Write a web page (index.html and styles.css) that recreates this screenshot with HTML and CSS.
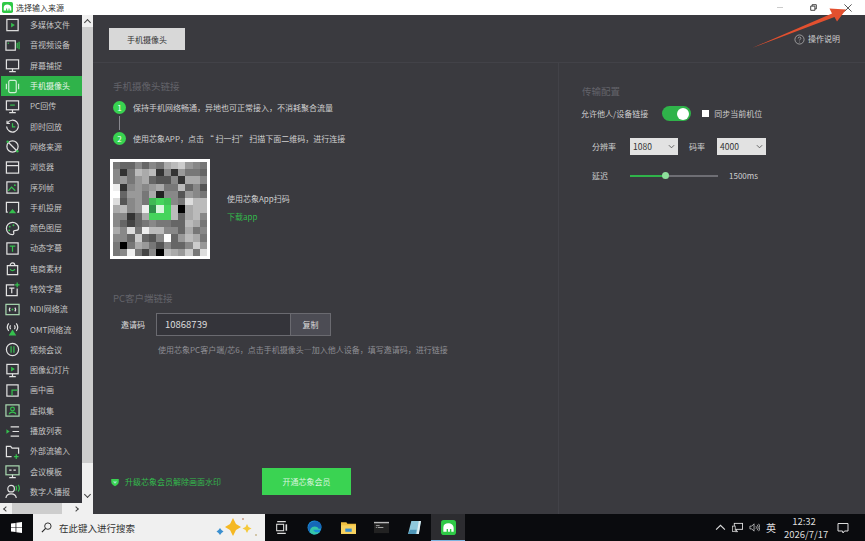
FILE: index.html
```html
<!DOCTYPE html>
<html lang="zh-CN">
<head>
  <meta charset="UTF-8" />
  <title>选择输入来源</title>
  <link rel="stylesheet" href="styles.css">
</head>
<body>

  <div class="titlebar">
    <svg class="app-logo" viewBox="0 0 16 16"><rect width="16" height="16" rx="2.5" fill="#2fc946"/><path d="M2.5 12.5V8C2.5 5 5 3.5 7.5 3.5c3.5 0 6 2 6 5v4H11V9.5H9.500v3h-2v-3H6v3z" fill="#fff"/></svg>
    <span class="title-text">选择输入来源</span>
    <div class="win-btns">
      <span class="win-min"></span>
      <svg class="win-restore" viewBox="0 0 10 10"><path d="M1 3h6v6H1zM3 3V1h6v6H7" fill="none" stroke="#333" stroke-width="1.3"/></svg>
      <svg class="win-close" viewBox="0 0 10 10"><path d="M.5.5l9 9M9.5.5l-9 9" stroke="#333" stroke-width="1"/></svg>
    </div>
  </div>

  <div class="app">
    <div class="side">
      <div class="side-top">
        <div class="source-list">
          <div class="source"><svg viewBox="0 0 16 16"><rect x="2" y="1.5" width="12" height="12"/><path class="g" d="M6.5 5v5l4-2.5z"/></svg>多媒体文件</div>
          <div class="source"><svg viewBox="0 0 16 16"><rect x="1" y="3" width="10" height="10"/><circle class="g" cx="3.5" cy="5.5" r=".8"/><path class="gs" d="M13 5v6M15 4v8"/></svg>音视频设备</div>
          <div class="source"><svg viewBox="0 0 16 16"><rect x="1.5" y="2" width="13" height="9.5"/><path d="M8 11.5v2.5M4.5 14.500h7"/></svg>屏幕捕捉</div>
          <div class="source active"><svg viewBox="0 0 16 16"><rect x="4" y="1.5" width="8" height="13" rx="1.5"/><path d="M1.500 5v6M14.5 5v6"/></svg>手机摄像头</div>
          <div class="source"><svg viewBox="0 0 16 16"><rect x="1.5" y="2" width="13" height="9.5"/><path d="M8 11.5v2.500M4.500 14.5h7"/><path class="gs" d="M5.500 6.5h5"/></svg>PC回传</div>
          <div class="source"><svg viewBox="0 0 16 16"><path d="M2.500 4.500A6.3 6.3 0 1 1 1.700 8"/><path d="M2.200 1.800v3h3"/><path class="gs" d="M8 4.500V8.500h3"/></svg>即时回放</div>
          <div class="source"><svg viewBox="0 0 16 16"><circle cx="8" cy="8" r="6"/><path d="M4 4l8 8"/><circle class="g" cx="2.8" cy="3" r="1.3"/><circle class="g" cx="13.2" cy="13" r="1.3"/></svg>网络来源</div>
          <div class="source"><svg viewBox="0 0 16 16"><rect x="1.5" y="2" width="13" height="12"/><path d="M1.500 6h13"/></svg>浏览器</div>
          <div class="source"><svg viewBox="0 0 16 16"><rect x="2" y="2" width="12" height="12"/><path class="gs" d="M3.500 11.500l3.500-4 4 4"/><circle class="g" cx="10.5" cy="5.5" r="1"/></svg>序列帧</div>
          <div class="source"><svg viewBox="0 0 16 16"><path d="M3 13H1.500V2.500h13V13H13"/><path class="g" d="M8 9.500l4 4.500H4z"/></svg>手机投屏</div>
          <div class="source"><svg viewBox="0 0 16 16"><path d="M8 1.500a6.500 6.500 0 1 0 0 13c2 0 1.500-2 1-3 0-1.500 1.500-1.500 3-1.500 2 0 2.500-1 2.500-2.500 0-3.500-3-6-6.500-6z"/><circle class="g" cx="5" cy="6" r="1"/><circle class="g" cx="9" cy="4.5" r="1"/><circle class="g" cx="4.5" cy="10" r="1"/></svg>颜色图层</div>
          <div class="source"><svg viewBox="0 0 16 16"><rect x="2" y="2" width="12" height="12"/><path class="gs" d="M5 5.500h6M8 5.500v6"/></svg>动态字幕</div>
          <div class="source"><svg viewBox="0 0 16 16"><path d="M2.500 5h11v9.500h-11zM5.500 5C5.500 1 10.500 1 10.500 5"/><path class="gs" d="M5.500 8.500c1 2.500 4 2.500 5 0"/></svg>电商素材</div>
          <div class="source"><svg viewBox="0 0 16 16"><path d="M10 3H1.500v11.500H13V7"/><path d="M4.500 6.500h5.500M7.200 6.500v5.500"/><path class="gs" d="M13 .5v5M10.500 3h5"/></svg>特效字幕</div>
          <div class="source"><svg viewBox="0 0 16 16"><rect class="gb" x="1" y="2.5" width="14" height="11"/><path d="M5.500 6c-1 1.200-1 2.800 0 4M10.500 6c1 1.200 1 2.800 0 4"/><circle class="g" cx="8" cy="8" r="1"/></svg>NDI网络流</div>
          <div class="source"><svg viewBox="0 0 16 16"><path d="M4 1.500C2 4 2 7 4 9.500M12 1.500C14 4 14 7 12 9.500M6 3.500c-1 1.300-1 2.700 0 4M10 3.500c1 1.300 1 2.700 0 4"/><path class="g" d="M8 8l4 6.500H4z"/></svg>OMT网络流</div>
          <div class="source"><svg viewBox="0 0 16 16"><circle cx="8" cy="8" r="6.5"/><path class="gs" d="M6.500 4.500v7M9.500 4.500v7"/></svg>视频会议</div>
          <div class="source"><svg viewBox="0 0 16 16"><rect x="2" y="1.5" width="12" height="10"/><path d="M8 11.500v3M4.500 14.500h7"/><path class="g" d="M6.500 4v5l4-2.500z"/></svg>图像幻灯片</div>
          <div class="source"><svg viewBox="0 0 16 16"><rect x="2" y="2" width="12" height="12"/><path class="gs" d="M7.500 13.500V7.500h6"/></svg>画中画</div>
          <div class="source"><svg viewBox="0 0 16 16"><rect class="gb" x="1" y="2" width="14" height="12"/><circle class="gs" cx="8" cy="6.5" r="2"/><path class="gs" d="M4.500 12c.5-3 6.500-3 7 0"/></svg>虚拟集</div>
          <div class="source"><svg viewBox="0 0 16 16"><path d="M6 3h9M8 8h7M6 13h9"/><path class="g" d="M1.500 5.500v5l3.500-2.500z"/></svg>播放列表</div>
          <div class="source"><svg viewBox="0 0 16 16"><path d="M7 13.500H1.500v-11H6l1.500 2h7v6"/><path class="gs" d="M9.500 13.500h5M12 11v5"/></svg>外部流输入</div>
          <div class="source"><svg viewBox="0 0 16 16"><rect class="gb" x="1" y="2" width="14" height="9.5"/><path d="M8 11.500v3M4.500 14.500h7"/><path d="M4.500 6.500h2.500M9 6.500h2.500"/></svg>会议模板</div>
          <div class="source"><svg viewBox="0 0 16 16"><circle cx="6.5" cy="5" r="3.5"/><path d="M1 15c.5-6 10.500-6 11 0"/><path class="gs" d="M11.500 2c1 1.500 1 3.500 0 5M14 1c1.500 2 1.500 5 0 7"/></svg>数字人播报</div>
        </div>
        <div class="vscroll">
          <span class="sb-up"></span>
          <span class="sb-thumb"></span>
          <span class="sb-down"></span>
        </div>
      </div>
      <div class="hscroll">
        <span class="hs-left"></span>
        <span class="hs-thumb"></span>
        <span class="hs-right"></span>
      </div>
    </div>

    <div class="main">
      <div class="main-head">
        <button class="tab-btn">手机摄像头</button>
        <div class="help">
          <svg viewBox="0 0 12 12"><circle cx="6" cy="6" r="5" fill="none" stroke="#bbb" stroke-width=".8"/><path d="M4.500 4.800c0-2 3-2 3 0 0 1-1.500 1-1.500 2.200" fill="none" stroke="#bbb" stroke-width=".8"/><circle cx="6" cy="8.800" r=".5" fill="#bbb"/></svg>
          操作说明
        </div>
      </div>

      <div class="main-body">
        <div class="left">
          <div class="group-title">手机摄像头链接</div>
          <div class="step step-first"><span class="step-num">1</span>保持手机网络畅通，异地也可正常接入，不消耗聚合流量</div>
          <div class="step-line"></div>
          <div class="step"><span class="step-num">2</span>使用芯象APP，点击 “ 扫一扫” 扫描下面二维码，进行连接</div>

          <div class="qr-row">
            <div class="qr" id="qr"></div>
            <div class="qr-side">
              <div>使用芯象App扫码</div>
              <div class="link">下载app</div>
            </div>
          </div>

          <div class="group-title pc-title">PC客户端链接</div>
          <div class="code-row">
            <span class="code-label">邀请码</span>
            <span class="code-input">10868739</span>
            <span class="code-copy">复制</span>
          </div>
          <div class="code-note">使用芯象PC客户端/芯6，点击手机摄像头—加入他人设备，填写邀请码，进行链接</div>

          <div class="vip-row">
            <svg viewBox="0 0 12 12"><path d="M1.500 2.500h9v3.500c0 2.500-2.500 4-4.500 5-2-1-4.500-2.500-4.500-5z" fill="#3ad352"/><path d="M3.500 5.500h5L6 8z" fill="#9fe8d0"/></svg>
            <span class="vip-text">升级芯象会员解除画面水印</span>
            <button class="vip-btn">开通芯象会员</button>
          </div>
        </div>

        <div class="right">
          <div class="group-title">传输配置</div>
          <div class="allow-row">
            <span>允许他人/设备链接</span>
            <span class="toggle"><i></i></span>
            <span class="check"></span>
            <span>同步当前机位</span>
          </div>
          <div class="select-row">
            <span class="lbl">分辨率</span>
            <span class="select">1080<svg viewBox="0 0 8 5"><path d="M1 1l3 3 3-3" fill="none" stroke="#555"/></svg></span>
            <span class="lbl-short">码率</span>
            <span class="select select-wide">4000<svg viewBox="0 0 8 5"><path d="M1 1l3 3 3-3" fill="none" stroke="#555"/></svg></span>
          </div>
          <div class="slider-row">
            <span class="lbl">延迟</span>
            <span class="slider"><b></b><i></i></span>
            <span>1500ms</span>
          </div>
        </div>
      </div>
    </div>
  </div>

  <div class="taskbar">
    <div class="start">
      <svg viewBox="0 0 12 12"><path d="M0 1.700L5 1v4.600H0zM5.800.9L12 0v5.600H5.800zM0 6.400h5V11l-5-.7zM5.800 6.400H12V12l-6.200-.9z" fill="#fff"/></svg>
    </div>
    <div class="search">
      <svg class="search-ico" viewBox="0 0 12 12"><circle cx="7.5" cy="4.5" r="3.5" fill="none" stroke="#222"/><path d="M5 7L1 11" stroke="#222" stroke-width="1.2"/></svg>
      <span>在此键入进行搜索</span>
      <svg class="sparkle" viewBox="0 0 42 24"><path d="M17 2l3 6 5 3-5 3-3 6-3-6-5-3 5-3z" fill="#f5b823"/><path d="M31 8l1.500 3 3 1.500-3 1.500-1.500 3-1.500-3-3-1.500 3-1.500z" fill="#f5c93a"/><path d="M4 12l1.500 2 2 1.500-2 1.500L4 19l-1.500-2-2-1.500 2-1.500z" fill="#3a8fd0"/><circle cx="27" cy="3" r="1" fill="#c89a80"/><circle cx="40" cy="19" r="1" fill="#c8b890"/></svg>
    </div>
    <div class="task-icon">
      <svg viewBox="0 0 14 14"><path d="M3 1.500h8M3 12.500h8" stroke="#ddd"/><rect x="2.5" y="4" width="6.5" height="6" fill="none" stroke="#ddd"/><path d="M11.500 4v6" stroke="#ddd" stroke-width="1.5"/></svg>
    </div>
    <div class="task-icon">
      <svg viewBox="0 0 14 14"><circle cx="7" cy="7" r="6.5" fill="#1a8fd8"/><path d="M1 8c1-5 7-6 10-3 1.500 1.500 2 3 1 4H6c0 2 3 3 6 2-1.500 2-3.500 2.500-5 2.500C4 13.500 2 11 2 9z" fill="#35c6a8"/><path d="M7 6c-3 0-5 3-4 6-2-2-2.500-5-1.500-7C3 2 7 .5 10 1.500c2 .7 3.500 2.500 3.500 5 0 1.500-1.500 2-3 1.500 0-1-1-2-3.500-2z" fill="#1567b8"/></svg>
    </div>
    <div class="task-icon">
      <svg viewBox="0 0 14 14"><path d="M0 2h5l1 1.500h8V13H0z" fill="#f0c040"/><rect x="0" y="5" width="14" height="8" fill="#f7d260"/><rect x="4" y="8" width="6" height="3" fill="#3a8fd0"/></svg>
    </div>
    <div class="task-icon">
      <svg viewBox="0 0 16 12"><rect width="16" height="12" fill="#222"/><rect width="16" height="1.5" fill="#bbb"/><path d="M2 4h4M2 6h1M4 6h6" stroke="#ccc" stroke-width=".8"/></svg>
    </div>
    <div class="task-icon">
      <svg viewBox="0 0 14 14"><path d="M4 1h9l-2 12H1z" fill="#8fc8dc"/><path d="M11 1h2l-2 12H9z" fill="#dfeef2"/><path d="M3 9h6l-1 4H1z" fill="#4f97b8"/></svg>
    </div>
    <div class="task-icon task-active">
      <svg viewBox="0 0 16 16"><rect width="16" height="16" rx="3" fill="#2fc946"/><path d="M2.500 12.500V8C2.500 5 5 3.500 7.500 3.500c3.500 0 6 2 6 5v4H11V9.500H9.500v3h-2v-3H6v3z" fill="#fff"/></svg>
    </div>
    <div class="tray">
      <svg class="tray-ico" viewBox="0 0 10 6"><path d="M1 5l4-4 4 4" fill="none" stroke="#ddd"/></svg>
      <svg class="tray-ico" viewBox="0 0 12 12"><rect x="2.5" y="1.5" width="9" height="6.5" fill="none" stroke="#ddd"/><path d="M5 8v2M3.500 10.500h3" stroke="#ddd"/><rect x=".5" y="4.5" width="3" height="6" fill="#111" stroke="#ddd" stroke-width=".8"/></svg>
      <svg class="tray-ico" viewBox="0 0 12 12"><path d="M1 4.500h2L5.500 2v8L3 7.500H1z" fill="none" stroke="#ddd" stroke-width=".8"/><path d="M7.500 4.500c.7 1 .7 2 0 3M9 3c1.300 2 1.300 4 0 6M10.500 2c1.700 2.500 1.700 5.500 0 8" fill="none" stroke="#ddd" stroke-width=".8"/></svg>
      <span class="ime">英</span>
      <div class="clock">
        <div>12:32</div>
        <div>2026/7/17</div>
      </div>
      <svg class="notify" viewBox="0 0 12 12"><path d="M1 1.500h10v7.500H7.500L6 11 5.500 9H1z" fill="none" stroke="#ddd"/></svg>
    </div>
  </div>

  <svg class="arrow" viewBox="0 0 865 541"><path d="M752 48L832 13.500 829.500 8.500 846 9.500 837 21.500 834.500 17z" fill="#e2502f"/></svg>

  <script src="qr.js"></script>
</body>
</html>
```

FILE: styles.css
```css
* {
  box-sizing: border-box;
}

body {
  font-family: "Noto Sans CJK SC", "Noto Sans", sans-serif;
  font-size: 8px;
  line-height: 12px;
  background-color: #3a3a3f;
  color: #cfcfcf;
  margin: 0;
  width: 865px;
  height: 541px;
  overflow: hidden;
  display: flex;
  flex-direction: column;
  position: relative;
}

/* title bar */
.titlebar {
  height: 15px;
  background-color: #fff;
  color: #333;
  display: flex;
  align-items: center;
  padding-left: 2px;
}

.app-logo {
  width: 11px;
  height: 11px;
  margin-right: 3px;
}

.win-btns {
  margin-left: auto;
  display: flex;
  align-items: center;
  padding-right: 13px;
}

.win-min {
  width: 6px;
  height: 1px;
  background-color: #ccc;
  margin-right: 27px;
}

.win-restore {
  width: 7px;
  height: 7px;
  margin-right: 27px;
}

.win-close {
  width: 8px;
  height: 8px;
}

/* body */
.app {
  flex: 1;
  display: flex;
  min-height: 0;
}

.side {
  width: 93px;
  display: flex;
  flex-direction: column;
}

.side-top {
  flex: 1;
  display: flex;
  min-height: 0;
}

.source-list {
  width: 82px;
  background-color: #34343a;
}

.source {
  height: 20.3px;
  display: flex;
  align-items: center;
  padding-left: 5px;
  color: #c4c4c4;
}

.source svg {
  width: 15px;
  height: 15px;
  margin-right: 10px;
  flex-shrink: 0;
  fill: none;
  stroke: #e2e2e2;
  stroke-width: 1.3;
}

.source svg .g {
  fill: #35c04e;
  stroke: none;
}

.source svg .gs {
  stroke: #35c04e;
}

.source svg .gb {
  stroke: #a8d8b0;
}

.source.active {
  background-color: #2fb34a;
  color: #e8f5ea;
  margin-left: 1px;
  padding-left: 4px;
}

.source.active svg {
  stroke: #cdeed4;
}

.vscroll {
  width: 11px;
  background-color: #f0f0f0;
  display: flex;
  flex-direction: column;
}

.sb-up {
  height: 12px;
  position: relative;
}

.sb-up::after {
  content: "";
  position: absolute;
  left: 3px;
  top: 5px;
  width: 4px;
  height: 4px;
  border-left: 1px solid #444;
  border-top: 1px solid #444;
  transform: rotate(45deg);
}

.sb-thumb {
  height: 436px;
  background-color: #cdcdcd;
}

.sb-down {
  margin-top: auto;
  height: 12px;
  position: relative;
}

.sb-down::after {
  content: "";
  position: absolute;
  left: 3px;
  top: 1px;
  width: 4px;
  height: 4px;
  border-right: 1px solid #444;
  border-bottom: 1px solid #444;
  transform: rotate(45deg);
}

.hscroll {
  height: 11px;
  background-color: #f0f0f0;
  display: flex;
  align-items: center;
}

.hs-left,
.hs-right {
  width: 4px;
  height: 4px;
  border-left: 1px solid #444;
  border-bottom: 1px solid #444;
  transform: rotate(45deg);
  margin-left: 4px;
}

.hs-right {
  transform: rotate(225deg);
  margin-left: 12px;
}

.hs-thumb {
  width: 50px;
  height: 100%;
  background-color: #cdcdcd;
  margin-left: 4px;
}

/* main panel */
.main {
  flex: 1;
  display: flex;
  flex-direction: column;
  min-width: 0;
}

.main-head {
  height: 48px;
  border-bottom: 1px solid #424248;
  display: flex;
  align-items: flex-start;
  justify-content: space-between;
  padding: 13px 25px 0 16px;
}

.tab-btn {
  width: 76px;
  height: 22px;
  background-color: #d8d8d8;
  border: none;
  font-family: inherit;
  font-size: 8px;
  color: #333;
  padding: 0;
}

.help {
  display: flex;
  align-items: center;
  gap: 3px;
  margin-top: 5px;
  height: 12px;
}

.help svg {
  width: 11px;
  height: 11px;
}

.main-body {
  flex: 1;
  display: flex;
  min-height: 0;
}

.left {
  width: 466px;
  border-right: 1px solid #424248;
  padding-left: 20px;
  display: flex;
  flex-direction: column;
}

.group-title {
  font-size: 9.5px;
  line-height: 14px;
  color: #63636a;
  margin-top: 16px;
  height: 14px;
}

.step {
  display: flex;
  align-items: center;
  height: 13px;
}

.step-first {
  margin-top: 8px;
}

.step-num {
  width: 13px;
  height: 13px;
  border-radius: 50%;
  background-color: #38d350;
  color: #fff;
  font-size: 8px;
  text-align: center;
  line-height: 13px;
  margin-right: 7px;
}

.step-line {
  width: 1px;
  height: 18px;
  background-color: #88888e;
  margin-left: 6px;
  border-top: 2px solid #3a3a3f;
  border-bottom: 2px solid #3a3a3f;
}

.qr-row {
  display: flex;
  align-items: center;
  margin: 14px 0 0 -3px;
}

.qr {
  width: 100px;
  height: 100px;
  background-color: #fff;
  padding: 3px;
  display: grid;
  grid-template-columns: repeat(13, 1fr);
  grid-template-rows: repeat(13, 1fr);
}

.qr-side {
  margin-left: 17px;
  padding-bottom: 2px;
  display: flex;
  flex-direction: column;
  gap: 6px;
}

.link {
  color: #33b94c;
}

.pc-title {
  margin-top: 32px;
}

.code-row {
  display: flex;
  align-items: center;
  margin-top: 8px;
  height: 23px;
  color: #ddd;
}

.code-label {
  width: 35px;
  padding-left: 8px;
  margin-right: 8px;
  white-space: nowrap;
}

.code-input {
  width: 135px;
  height: 23px;
  border: 1px solid #6a6a70;
  background-color: #34343a;
  font-size: 9.5px;
  line-height: 21px;
  padding-left: 8px;
}

.code-copy {
  width: 40px;
  height: 23px;
  background-color: #4c4c54;
  border: 1px solid #6a6a70;
  border-left: none;
  text-align: center;
  line-height: 21px;
}

.code-note {
  margin: 8px 0 0 45px;
  color: #8e8e94;
}

.vip-row {
  margin-top: auto;
  margin-bottom: 19px;
  display: flex;
  align-items: center;
}

.vip-row svg {
  width: 10px;
  height: 10px;
  margin-left: -3px;
}

.vip-text {
  color: #33b94c;
  margin-left: 5px;
  width: 137px;
}

.vip-btn {
  width: 89px;
  height: 27px;
  background-color: #3ad352;
  color: #d8f5dd;
  border: none;
  font-family: inherit;
  font-size: 8px;
  padding: 0;
}

.right {
  flex: 1;
  padding: 5px 0 0 23px;
}

.allow-row {
  display: flex;
  align-items: center;
  margin-top: 8px;
  height: 15px;
  margin-left: -1px;
}

.toggle {
  width: 29px;
  height: 15px;
  border-radius: 8px;
  background-color: #2fb34a;
  margin: 0 11px 0 14px;
  display: flex;
  justify-content: flex-end;
  align-items: center;
  padding-right: 2px;
}

.toggle i {
  width: 12px;
  height: 12px;
  border-radius: 50%;
  background-color: #fff;
}

.check {
  width: 7px;
  height: 7px;
  background-color: #fff;
  margin-right: 5px;
}

.select-row {
  display: flex;
  align-items: center;
  margin-top: 17px;
  height: 17px;
}

.lbl {
  width: 38px;
  margin-left: 10px;
  flex-shrink: 0;
}

.lbl-short {
  margin: 0 12px 0 11px;
}

.select {
  width: 48px;
  height: 17px;
  background-color: #e2e2e2;
  color: #333;
  font-size: 8.5px;
  line-height: 17px;
  padding: 0 3px;
  display: flex;
  align-items: center;
  justify-content: space-between;
}

.select-wide {
  width: 49px;
}

.select svg {
  width: 7px;
  height: 5px;
}

.slider-row {
  display: flex;
  align-items: center;
  margin-top: 12px;
  height: 17px;
}

.slider {
  width: 88px;
  height: 2px;
  background-color: #6e6e74;
  margin-right: 11px;
  position: relative;
}

.slider b {
  display: block;
  width: 35px;
  height: 2px;
  background-color: #2fb34a;
}

.slider i {
  position: absolute;
  left: 32px;
  top: -2.5px;
  width: 7px;
  height: 7px;
  border-radius: 50%;
  background-color: #8ee09c;
}

/* taskbar */
.taskbar {
  height: 27px;
  background-color: #0a0b0e;
  display: flex;
  align-items: stretch;
}

.start {
  width: 33px;
  display: flex;
  align-items: center;
  justify-content: center;
}

.start svg {
  width: 11px;
  height: 11px;
}

.search {
  width: 232px;
  background-color: #f0f0f0;
  color: #333;
  font-size: 9.5px;
  display: flex;
  align-items: center;
  padding-left: 8px;
}

.search-ico {
  width: 11px;
  height: 11px;
  margin-right: 7px;
}

.sparkle {
  width: 42px;
  height: 24px;
  margin-left: auto;
  margin-right: 7px;
}

.task-icon {
  width: 33.3px;
  display: flex;
  align-items: center;
  justify-content: center;
}

.task-icon svg {
  width: 15px;
  height: 15px;
}

.task-active {
  background-color: #2c2c30;
  border-bottom: 1px solid #7db4e0;
}

.tray {
  margin-left: auto;
  display: flex;
  align-items: center;
  color: #ddd;
}

.tray-ico {
  width: 11px;
  height: 11px;
  margin-right: 6px;
}

.ime {
  font-size: 10px;
  margin-right: 8px;
}

.clock {
  font-size: 9.5px;
  line-height: 13px;
  text-align: center;
  width: 40px;
}

.notify {
  width: 12px;
  height: 12px;
  margin: 0 16px 0 13px;
}

/* red marker drawn over the window */
.arrow {
  position: absolute;
  left: 0;
  top: 0;
  width: 865px;
  height: 541px;
  pointer-events: none;
}
```

FILE: qr.js
```js
// mosaic cover of the qr code, one hex digit of grey per cell
const rows = [
  "7668687abc987",
  "837bab3839776",
  "8979a65583aa8",
  "e38989a77b685",
  "f6997a2885987",
  "d5897abb87dbb",
  "ab89e5bfb0abb",
  "8836a8bbb6ab8",
  "8646787766ba7",
  "a8d7ebb886a78",
  "886c658f69ba7",
  "707a975866 8c9".replace(" ", ""),
  "78e7480ba9c7d"
];

// cells under the green badge in the middle
const green = { "5,5": "#3fb955", "5,6": "#45d45c", "5,7": "#3fc455",
                "6,5": "#2f8f4a", "6,6": "#d8f5dd", "6,7": "#45d45c",
                "7,5": "#45d45c", "7,6": "#45d45c", "7,7": "#45d45c" };

const qr = document.getElementById("qr");
rows.forEach((row, r) => {
  [...row].forEach((ch, c) => {
    const cell = document.createElement("div");
    const v = parseInt(ch, 16) * 17;
    cell.style.backgroundColor = green[r + "," + c] || `rgb(${v},${v},${v})`;
    qr.appendChild(cell);
  });
});
```
